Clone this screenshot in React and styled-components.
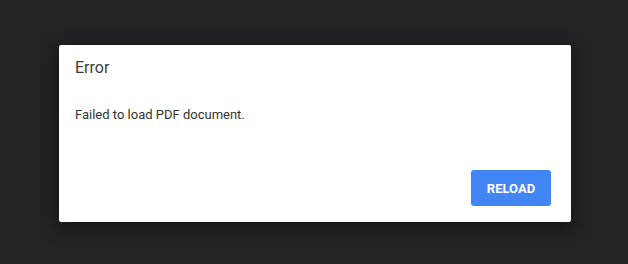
import styled, { createGlobalStyle } from "styled-components";

const Global = createGlobalStyle`
  html, body {
    margin: 0;
    padding: 0;
    background: #222326;
    font-family: Roboto, "Liberation Sans", sans-serif;
  }
`;

const Page = styled.div`
  width: 628px;
  height: 264px;
  padding-top: 45px;
  padding-left: 59px;
  box-sizing: border-box;
`;

const Dialog = styled.div`
  width: 512px;
  height: 177px;
  box-sizing: border-box;
  background: #fff;
  border-radius: 2px;
  box-shadow: 0 4px 16px rgba(0, 0, 0, 0.5);
  display: flex;
  flex-direction: column;
  padding: 12px 20px 16px 16px;
`;

const Title = styled.div`
  font-size: 16px;
  line-height: 22px;
  color: #3c3c3c;
`;

const Message = styled.div`
  margin-top: 26px;
  font-size: 13px;
  line-height: 20px;
  color: #333;
`;

const Footer = styled.div`
  margin-top: auto;
  display: flex;
  justify-content: flex-end;
`;

const Button = styled.button`
  width: 80px;
  height: 36px;
  border: none;
  border-radius: 3px;
  background: #4285f4;
  color: #fff;
  font-family: Roboto, "Liberation Sans", sans-serif;
  font-size: 13px;
  font-weight: 700;
  cursor: pointer;
`;

export default function App() {
  return (
    <>
      <Global />
      <Page>
        <Dialog>
          <Title>Error</Title>
          <Message>Failed to load PDF document.</Message>
          <Footer>
            <Button>RELOAD</Button>
          </Footer>
        </Dialog>
      </Page>
    </>
  );
}
